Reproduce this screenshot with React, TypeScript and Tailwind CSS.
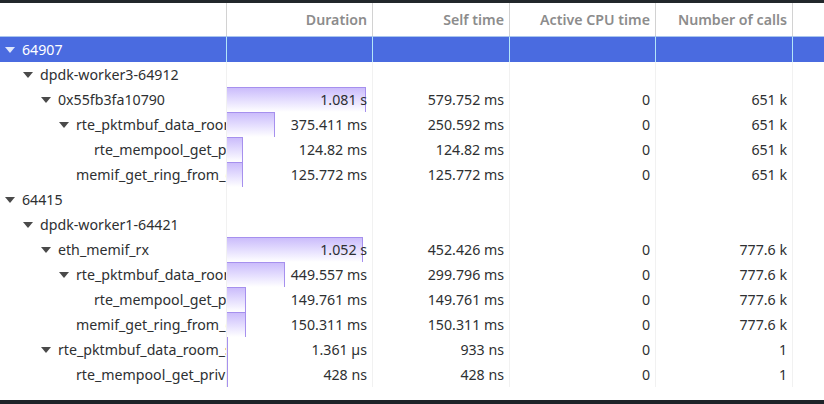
import React from "react";

type Row = {
  level: number;
  name: string;
  expand?: boolean;
  selected?: boolean;
  d?: number;
  dur?: string;
  self?: string;
  cpu?: string;
  calls?: string;
};

const rows: Row[] = [
  { level: 0, name: "64907", expand: true, selected: true },
  { level: 1, name: "dpdk-worker3-64912", expand: true },
  { level: 2, name: "0x55fb3fa10790", expand: true, d: 1.081, dur: "1.081 s", self: "579.752 ms", cpu: "0", calls: "651 k" },
  { level: 3, name: "rte_pktmbuf_data_room_size", expand: true, d: 0.375411, dur: "375.411 ms", self: "250.592 ms", cpu: "0", calls: "651 k" },
  { level: 4, name: "rte_mempool_get_priv", d: 0.12482, dur: "124.82 ms", self: "124.82 ms", cpu: "0", calls: "651 k" },
  { level: 3, name: "memif_get_ring_from_queue", d: 0.125772, dur: "125.772 ms", self: "125.772 ms", cpu: "0", calls: "651 k" },
  { level: 0, name: "64415", expand: true },
  { level: 1, name: "dpdk-worker1-64421", expand: true },
  { level: 2, name: "eth_memif_rx", expand: true, d: 1.052, dur: "1.052 s", self: "452.426 ms", cpu: "0", calls: "777.6 k" },
  { level: 3, name: "rte_pktmbuf_data_room_size", expand: true, d: 0.449557, dur: "449.557 ms", self: "299.796 ms", cpu: "0", calls: "777.6 k" },
  { level: 4, name: "rte_mempool_get_priv", d: 0.149761, dur: "149.761 ms", self: "149.761 ms", cpu: "0", calls: "777.6 k" },
  { level: 3, name: "memif_get_ring_from_queue", d: 0.150311, dur: "150.311 ms", self: "150.311 ms", cpu: "0", calls: "777.6 k" },
  { level: 2, name: "rte_pktmbuf_data_room_size", expand: true, d: 0.000001361, dur: "1.361 µs", self: "933 ns", cpu: "0", calls: "1" },
  { level: 3, name: "rte_mempool_get_priv", d: 0.000000428, dur: "428 ns", self: "428 ns", cpu: "0", calls: "1" },
];

const cols = "grid grid-cols-[227px_146px_137px_146px_137px_1fr]";

function Arrow({ light }: { light?: boolean }) {
  return (
    <svg width="10" height="6" viewBox="0 0 10 6">
      <polygon points="0,0 10,0 5,6" fill={light ? "#dfe7fb" : "#4a4a4a"} />
    </svg>
  );
}

export default function App() {
  return (
    <div
      className="flex h-[404px] w-[824px] flex-col bg-white text-[14.2px] text-[#2e3032]"
      style={{ fontFamily: '"Noto Sans", sans-serif' }}
    >
      <div className="h-[3px] bg-[#22272b]" />

      {/* header */}
      <div className={`${cols} h-[34px] border-b border-[#a9c5ee] font-semibold text-[#8c8c8c]`}>
        <div className="border-r border-[#d2d2d2]" />
        <div className="flex items-center justify-end border-r border-[#d2d2d2] pr-[5px]">Duration</div>
        <div className="flex items-center justify-end border-r border-[#d2d2d2] pr-[5px]">Self time</div>
        <div className="flex items-center justify-end border-r border-[#d2d2d2] pr-[5px]">Active CPU time</div>
        <div className="flex items-center justify-end border-r border-[#d2d2d2] pr-[5px]">Number of calls</div>
        <div />
      </div>

      {rows.map((r, i) => {
        const sep = r.selected ? "border-[#b4e6f8]" : "border-[#f1f1f1]";
        const w = r.d !== undefined ? Math.max(1, Math.round(r.d * 129)) : 0;
        return (
          <div
            key={i}
            className={`${cols} h-[25px] ${r.selected ? "bg-[#4a6be0] text-white" : ""}`}
          >
            <div
              className={`flex items-center overflow-hidden whitespace-nowrap border-r pr-[1px] ${sep}`}
              style={{ paddingLeft: r.level * 18 + 4 }}
            >
              <div className="flex w-[18px] shrink-0 items-center pl-[1px]">
                {r.expand && <Arrow light={r.selected} />}
              </div>
              <span>{r.name}</span>
            </div>
            <div className={`relative flex items-center justify-end border-r pr-[5px] ${sep}`}>
              {r.d !== undefined && (
                <div
                  className="absolute left-0 top-0 h-full border-r border-t border-[#a690ee] bg-gradient-to-b from-[#cbbcfb] to-white"
                  style={{ width: w }}
                />
              )}
              <span className="relative">{r.dur}</span>
            </div>
            <div className={`flex items-center justify-end border-r pr-[5px] ${sep}`}>{r.self}</div>
            <div className={`flex items-center justify-end border-r pr-[5px] ${sep}`}>{r.cpu}</div>
            <div className={`flex items-center justify-end border-r pr-[5px] ${sep}`}>{r.calls}</div>
            <div />
          </div>
        );
      })}

      <div className="flex-1" />
      <div className="h-[4px] bg-[#1d2429]" />
    </div>
  );
}
